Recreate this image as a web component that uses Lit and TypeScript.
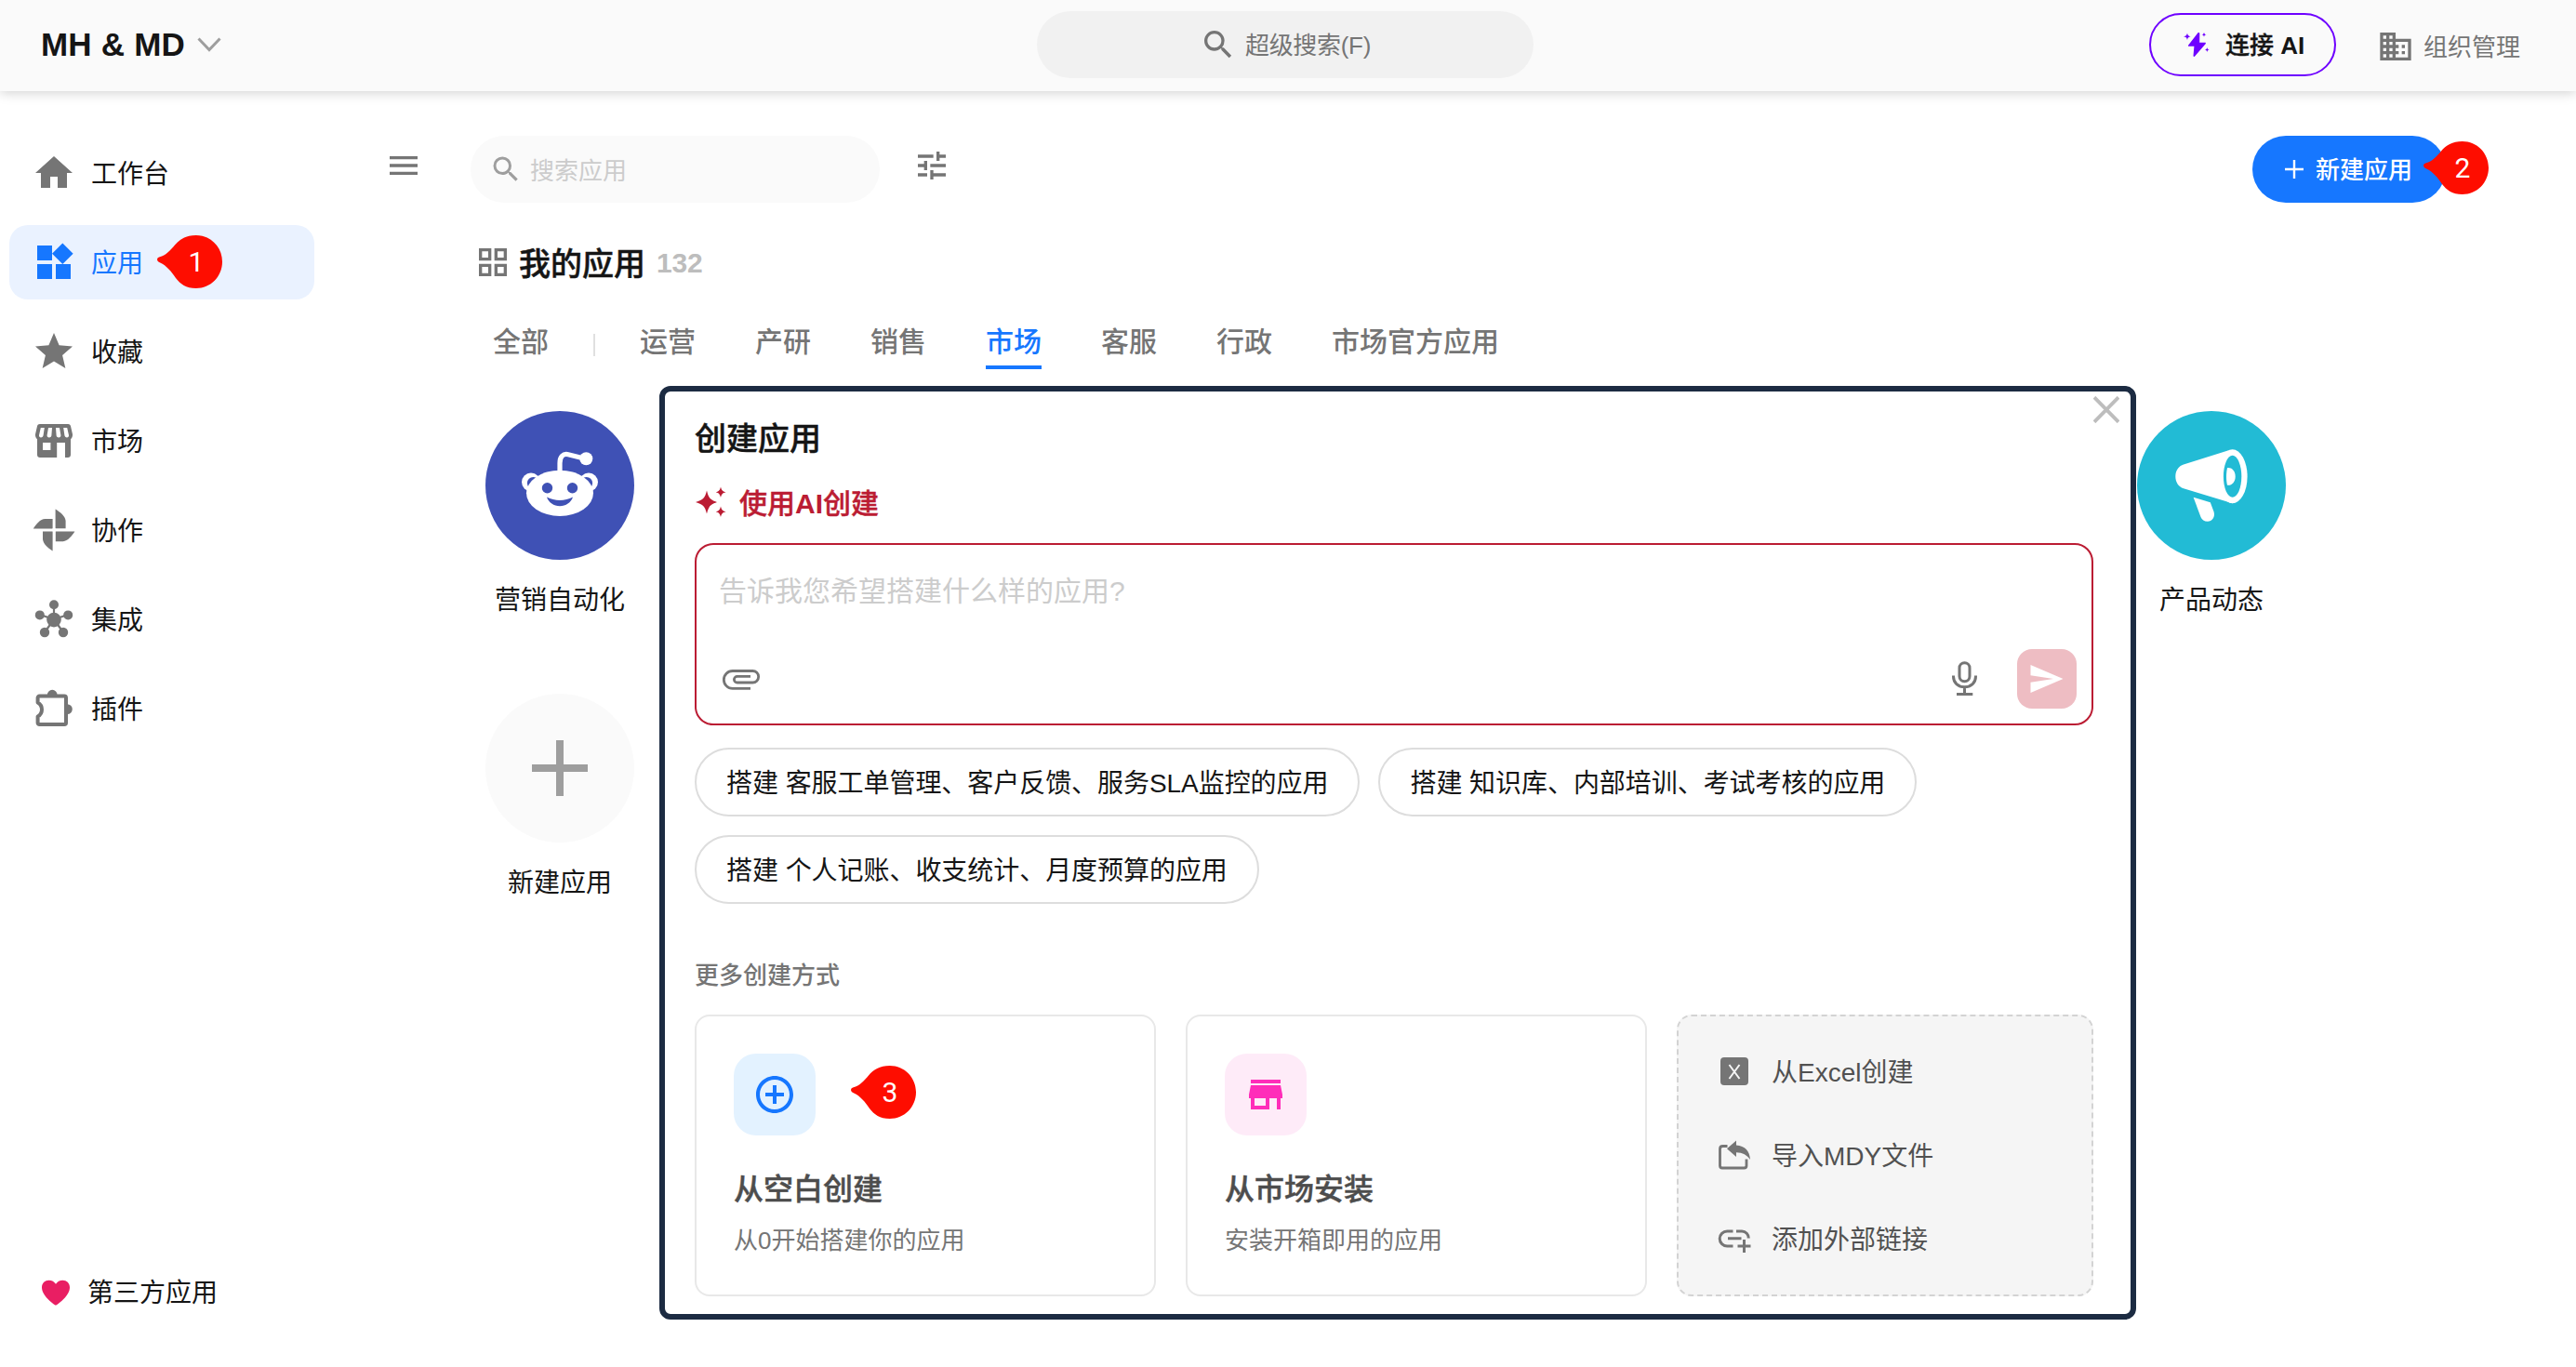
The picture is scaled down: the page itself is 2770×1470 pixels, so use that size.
import { LitElement, html, css, svg } from "lit";
import { customElement, property } from "lit/decorators.js";
import { classMap } from "lit/directives/class-map.js";

const glyphs: Record<string, unknown> = {
  home: svg`<path d="M10 20v-6h4v6h5v-8h3L12 3 2 12h3v8z"/>`,
  widgets: svg`<path d="M13 13v8h8v-8h-8zM3 21h8v-8H3v8zM3 3v8h8V3H3zm13.66-1.31L11 7.34 16.66 13l5.66-5.66-5.66-5.65z"/>`,
  star: svg`<path d="M12 17.27 18.18 21l-1.64-7.03L22 9.24l-7.19-.61L12 2 9.19 8.63 2 9.24l5.46 4.73L5.82 21z"/>`,
  market: svg`<path fill-rule="evenodd" d="M4.4 3h15.2c.7 0 1.2.4 1.4 1.1l1 4.4c.1 1.1-.3 2-1 2.6V19.500c0 .9-.6 1.500-1.500 1.500H4.500C3.600 21 3 20.400 3 19.500V11.100c-.7-.6-1.100-1.500-1-2.600l1-4.400C3.200 3.400 3.700 3 4.400 3zM4.900 5 4 9c-.1.700.4 1.200 1 1.200.7 0 1.200-.5 1.300-1.200L6.900 5zM9 5 8.300 9c-.1.700.4 1.200 1.100 1.200.8 0 1.300-.5 1.300-1.200L11 5zM13 5l.3 4c0 .7.500 1.200 1.300 1.200.7 0 1.200-.5 1.100-1.200L15 5zM17.100 5l.6 4c.1.700.6 1.200 1.300 1.200.6 0 1.100-.5 1-1.200L19.100 5zM6 13v4h4.200v-4zM13.600 13v8H18v-8z"/>`,
  wheel: svg`<path d="M12.800.800V11.100H18.300V7C18 4.500 15.500 2.500 12.800.800zM11.300 23.200V12.800H6v4.200c.3 2.500 2.600 4.500 5.300 6.200zM.9 11.300H11.300V6H7.200C4.600 6.200 2.600 8.600.9 11.300zM23.200 12.800H12.900v5.300h4c2.600-.3 4.600-2.600 6.300-5.300z"/><circle cx="12.050" cy="11.900" r="1" fill="#fff"/>`,
  hub: svg`<g stroke="currentColor" stroke-width="1.100"><path d="M12 12V4M12 12 4.500 9.500M12 12l7.500-2.500M12 12l-5 7M12 12l5 7"/></g><circle cx="12" cy="12.300" r="3.900"/><circle cx="12" cy="4.100" r="2.500"/><circle cx="4.400" cy="9.700" r="2.500"/><circle cx="19.600" cy="9.700" r="2.500"/><circle cx="7" cy="19" r="2.600"/><circle cx="17" cy="19" r="2.600"/>`,
  puzzle: svg`<path fill="none" stroke="currentColor" stroke-width="2" stroke-linejoin="round" d="M4.200 5.300H17.600a.9.900 0 0 1 .9.900V19.600a.9.900 0 0 1-.9.900H4.200a.9.900 0 0 1-.9-.9V16.200a4.300 4.300 0 0 0 0-7.500V6.200a.9.900 0 0 1 .9-.9z"/><path d="M8.400 4.600a2.700 2.700 0 0 1 5.400 0zM19.200 9.600a2.700 2.700 0 0 1 0 5.400z"/>`,
  menu: svg`<path d="M3 18h18v-2H3v2zm0-5h18v-2H3v2zm0-7v2h18V6H3z"/>`,
  search: svg`<path d="M15.500 14h-.79l-.28-.27A6.471 6.471 0 0 0 16 9.500 6.500 6.500 0 1 0 9.500 16c1.610 0 3.090-.59 4.230-1.570l.27.28v.79l5 4.990L20.490 19l-4.990-5zm-6 0C7.010 14 5 11.990 5 9.500S7.010 5 9.500 5 14 7.010 14 9.500 11.990 14 9.500 14z"/>`,
  tune: svg`<path d="M3 17v2h6v-2H3zM3 5v2h10V5H3zm10 16v-2h8v-2h-8v-2h-2v6h2zM7 9v2H3v2h4v2h2V9H7zm14 4v-2H11v2h10zm-6-4h2V7h4V5h-4V3h-2v6z"/>`,
  grid: svg`<path fill-rule="evenodd" d="M3 3v8h8V3H3zm6 6H5V5h4v4zm-6 4v8h8v-8H3zm6 6H5v-4h4v4zm4-16v8h8V3h-8zm6 6h-4V5h4v4zm-6 4v8h8v-8h-8zm6 6h-4v-4h4v4z"/>`,
  business: svg`<path d="M12 7V3H2v18h20V7H12zM6 19H4v-2h2v2zm0-4H4v-2h2v2zm0-4H4V9h2v2zm0-4H4V5h2v2zm4 12H8v-2h2v2zm0-4H8v-2h2v2zm0-4H8V9h2v2zm0-4H8V5h2v2zm10 12h-8v-2h2v-2h-2v-2h2v-2h-2V9h8v10zm-2-8h-2v2h2v-2zm0 4h-2v2h2v-2z"/>`,
  attachment: svg`<path fill="none" stroke="currentColor" stroke-width="1.400" d="M17 17.200H7.400A4.720 4.720 0 0 1 7.400 7.750H18.200A3.120 3.120 0 0 1 18.200 14H9.850A1.650 1.650 0 0 1 9.850 10.700H17"/>`,
  addCircle: svg`<path d="M13 7h-2v4H7v2h4v4h2v-4h4v-2h-4V7zm-1-5C6.480 2 2 6.480 2 12s4.480 10 10 10 10-4.480 10-10S17.520 2 12 2zm0 18c-4.410 0-8-3.590-8-8s3.590-8 8-8 8 3.590 8 8-3.590 8-8 8z"/>`,
  store: svg`<path d="M20 4H4v2h16V4zm1 10v-2l-1-5H4l-1 5v2h1v6h10v-6h4v6h2v-6h1zm-9 4H6v-4h6v4z"/>`,
  heart: svg`<path d="M12 21.200C9.500 19.600 2 14 2 8.300 2 5 4.300 3.100 7 3.100c2.200 0 4 1 5 2.800 1-1.800 2.800-2.800 5-2.800 2.700 0 5 1.900 5 5.200 0 5.700-7.500 11.300-10 12.900z"/>`,
};

@customElement("ui-icon")
export class UiIcon extends LitElement {
  @property() name = "";
  static styles = css`
    :host { display: block; flex: none; width: 40px; height: 40px; }
    .glyph { display: block; width: 100%; height: 100%; fill: currentColor; overflow: visible; }
  `;
  render() {
    return html`<svg class="glyph" viewBox="0 0 24 24">${glyphs[this.name]}</svg>`;
  }
}

@customElement("step-marker")
export class StepMarker extends LitElement {
  @property() label = "";
  static styles = css`
    :host { position: absolute; display: block; width: 70px; height: 57px; z-index: 5; }
    .drop { display: block; width: 70px; height: 57px; }
    .num {
      position: absolute; inset: 0 0 0 14px; text-align: center;
      font: 400 30px/57px Roboto, "Liberation Sans", sans-serif; color: #fff;
    }
  `;
  render() {
    return html`
      <svg class="drop" viewBox="0 0 70 57">
        <path fill="#fe0d00" d="M2.800 23.200C9 21.800 14 16.500 19 10.500 24 4.500 31 0 41.800 0 57.600 0 70 12.700 70 28.500S57.600 57 41.800 57C31 57 25 52.500 20 46 15 38.500 10 32.500 3.200 29.400-.9 28.200-1 24 2.800 23.200z"/>
      </svg>
      <span class="num">${this.label}</span>
    `;
  }
}

const navItems = [
  { icon: "home", label: "工作台" },
  { icon: "widgets", label: "应用", active: true, step: "1" },
  { icon: "star", label: "收藏" },
  { icon: "market", label: "市场" },
  { icon: "wheel", label: "协作" },
  { icon: "hub", label: "集成" },
  { icon: "puzzle", label: "插件" },
];

const tabs = ["运营", "产研", "销售", "市场", "客服", "行政", "市场官方应用"];

const prompts = [
  "搭建 客服工单管理、客户反馈、服务SLA监控的应用",
  "搭建 知识库、内部培训、考试考核的应用",
  "搭建 个人记账、收支统计、月度预算的应用",
];

@customElement("app-root")
export class AppRoot extends LitElement {
  static styles = css`
    :host {
      display: block; position: relative; width: 2770px; height: 1470px; overflow: hidden;
      background: #fff; color: #151515;
      font-family: "Liberation Sans", "Noto Sans CJK SC", sans-serif;
      font-size: 28px; line-height: 40px; white-space: nowrap;
    }
    * { box-sizing: border-box; }
    svg { display: block; flex: none; }
    .t1 { padding-top: 2px; }
    .t2 { padding-top: 4px; }
    .medium { font-weight: 500; }
    .semi { font-weight: 500; -webkit-text-stroke: .014em currentColor; }
    .latin { font-weight: 700; -webkit-text-stroke: 0; }

    .header {
      position: relative; display: grid; grid-template-columns: 1fr 534px 1fr; align-items: center;
      height: 98px; padding-bottom: 2px; background: #fafafa; box-shadow: 0 2px 12px rgba(0, 0, 0, .18);
    }
    .org { display: flex; align-items: center; gap: 13px; padding-left: 44px; font-size: 35px; font-weight: 700; letter-spacing: .2px; }
    .supersearch {
      display: flex; align-items: center; justify-content: center; gap: 9px; height: 72px;
      margin-left: -3px; margin-right: 3px;
      border-radius: 36px; background: #f1f1f1; color: #757575; font-size: 26px; letter-spacing: -.3px;
    }
    .actions { display: flex; align-items: center; justify-content: flex-end; padding-right: 60px; }
    .connect {
      display: flex; align-items: center; width: 201px; height: 68px; padding-left: 34px; gap: 16px;
      border: 2px solid #6e00ff; border-radius: 34px; font-size: 26px;
    }
    .manage { display: flex; align-items: center; gap: 10px; margin-left: 44px; color: #757575; font-size: 26px; padding-top: 4px; }

    .page { display: flex; height: 1372px; }
    .sidebar { display: flex; flex-direction: column; gap: 16px; width: 348px; padding: 48px 10px 40px; }
    .nav { position: relative; display: flex; align-items: center; gap: 16px; height: 80px; padding-left: 24px; border-radius: 20px; color: #151515; }
    .nav-icon { width: 48px; height: 48px; color: #757575; }
    .nav.active { background: #eaf2ff; color: #1677ff; }
    .nav.active .nav-icon { color: #1677ff; }
    .third { margin-top: auto; padding-left: 32px; }
    .heart { width: 36px; height: 36px; color: #e91e63; }
    .step-nav { left: 159px; top: 11px; }

    .content { flex: 1; padding-top: 48px; }
    .toolbar { display: flex; align-items: center; height: 72px; padding: 0 140px 0 66px; }
    .tool { color: #757575; margin-bottom: 8px; }
    .appsearch {
      display: flex; align-items: center; gap: 8px; width: 440px; height: 72px; margin: 0 36px 0 52px;
      padding-left: 20px; border-radius: 36px; background: #fafafa; color: #ccc; font-size: 26px;
    }
    .appsearch-icon { width: 36px; height: 36px; color: #9e9e9e; }
    .create {
      position: relative; display: flex; align-items: center; gap: 13px; width: 208px; height: 72px; margin-left: auto;
      padding-left: 35px; border-radius: 36px; background: #1677ff; color: #fff; font-size: 26px;
    }
    .step-create { left: 184px; top: 6px; }
    .section { display: flex; align-items: center; gap: 8px; height: 40px; margin-top: 44px; padding-left: 162px; }
    .section-icon { color: #757575; }
    .section-title { font-size: 34px; }
    .count { margin-left: 4px; font-size: 30px; font-weight: 700; color: #bdbdbd; letter-spacing: -.2px; }
    .tabs { display: flex; align-items: flex-start; gap: 64px; height: 51px; margin-top: 44px; padding-left: 182px; color: #757575; font-size: 30px; }
    .tab { height: 51px; padding-top: 2px; border-bottom: 4px solid transparent; }
    .tab.on { color: #1677ff; border-color: #1677ff; }
    .bar { width: 2px; height: 24px; margin: 13px -16px 0; background: #e0e0e0; }
    .apps { display: grid; grid-template-columns: repeat(9, 222px); row-gap: 80px; margin-top: 45px; padding-left: 143px; }
    .app { display: flex; flex-direction: column; align-items: center; gap: 24px; height: 224px; }
    .app.first { grid-column: 1; }
    .app.last { grid-column: 9; }

    .dialog {
      position: absolute; left: 709px; top: 415px; width: 1588px; height: 1004px; z-index: 3;
      display: flex; flex-direction: column; padding: 0 40px 0 32px;
      border: 6px solid #1c2b42; border-radius: 12px; background: #fff;
    }
    .close { position: absolute; right: 12px; top: 5px; }
    .dialog-title { margin-top: 31px; font-size: 34px; }
    .ai { display: flex; align-items: center; gap: 14px; height: 40px; margin-top: 28px; color: #bb1c33; font-size: 30px; }
    .box {
      display: flex; flex-direction: column; justify-content: space-between; height: 196px; margin-top: 24px;
      padding: 30px 16px 16px 24px; border: 2px solid #bb1c33; border-radius: 20px;
    }
    .hint { color: #ccc; font-size: 30px; }
    .box-actions { display: flex; align-items: center; color: #757575; }
    .clip { width: 48px; height: 48px; }
    .mic { margin-left: auto; }
    .send { display: grid; place-items: center; width: 64px; height: 64px; margin-left: 43px; border-radius: 16px; background: #eebdc3; }
    .chips { display: flex; flex-wrap: wrap; gap: 20px; margin-top: 24px; }
    .chip { display: flex; align-items: center; height: 74px; padding: 4px 32px 0; border: 2px solid #ddd; border-radius: 37px; letter-spacing: -.05px; }
    .more { margin-top: 57px; color: #757575; font-size: 26px; }
    .ways { display: flex; gap: 32px; margin-top: 22px; }
    .way { position: relative; width: 496px; height: 303px; padding: 40px; border: 2px solid #e8e8e8; border-radius: 16px; }
    .tile { display: grid; place-items: center; width: 88px; height: 88px; border-radius: 24px; }
    .tile.blue { background: #e3f2ff; color: #1677ff; }
    .tile.pink { background: #feebf8; color: #ff2db9; }
    .tile-icon { width: 48px; height: 48px; }
    .way-title { margin-top: 38px; font-size: 32px; color: #4d4d4d; }
    .way-sub { margin-top: 15px; font-size: 26px; color: #757575; }
    .step-way { left: 166px; top: 53px; }
    .others {
      display: flex; flex-direction: column; gap: 46px; width: 448px; height: 303px; padding: 37px 40px;
      border: 2px dashed #d3d3d3; border-radius: 16px; background: #f5f5f5; color: #515151;
    }
    .other { display: flex; align-items: center; gap: 20px; height: 44px; }
  `;

  private renderHeader() {
    return html`
      <header class="header">
        <div class="org">
          <span>MH &amp; MD</span>
          <svg width="26" height="16" viewBox="0 0 26 16" fill="none" stroke="#9e9e9e" stroke-width="3"><path d="M1.500 1.500 13 13.500 24.500 1.500"/></svg>
        </div>
        <div class="supersearch"><ui-icon name="search"></ui-icon><span class="t1">超级搜索(F)</span></div>
        <div class="actions">
          <div class="connect semi">
            <svg width="30" height="28" viewBox="0 0 30 28" fill="#6e00ff">
              <path d="M16.300 1.500 6.200 14.400c-.5.700-.2 1.400.6 1.400h5.600L11.500 26c.1 1 1 1.200 1.600.5L24.600 13.200c.6-.8.300-1.500-.6-1.500h-5.800L18.300 2c-.1-1-1.300-1.400-2-.5z"/>
              <path d="M5 1.500c.4 2.500 1 3.100 3.600 3.700C6 5.800 5.400 6.400 5 9 4.500 6.400 3.900 5.800 1 5.200 3.900 4.600 4.500 4 5 1.500zM23 .800c.3 1.700.8 2.200 2.500 2.500-1.700.3-2.200.8-2.500 2.500-.3-1.700-.8-2.200-2.500-2.500 1.700-.3 2.200-.8 2.500-2.500zM26.300 17c.3 1.700.8 2.200 2.500 2.500-1.700.3-2.200.8-2.500 2.500-.3-1.700-.8-2.200-2.500-2.500 1.700-.3 2.200-.8 2.500-2.500z"/>
            </svg>
            <span class="t1">连接 <span class="latin">AI</span></span>
          </div>
          <div class="manage"><ui-icon name="business"></ui-icon><span class="t1">组织管理</span></div>
        </div>
      </header>
    `;
  }

  private renderSidebar() {
    return html`
      <nav class="sidebar">
        ${navItems.map(
          (n) => html`
            <div class=${classMap({ nav: true, active: !!n.active })}>
              <ui-icon class="nav-icon" name=${n.icon}></ui-icon><span class="t2">${n.label}</span>
              ${n.step ? html`<step-marker class="step-nav" label=${n.step}></step-marker>` : null}
            </div>
          `
        )}
        <div class="nav third"><ui-icon class="heart" name="heart"></ui-icon><span class="t1">第三方应用</span></div>
      </nav>
    `;
  }

  private renderContent() {
    return html`
      <main class="content">
        <div class="toolbar">
          <ui-icon class="tool" name="menu"></ui-icon>
          <div class="appsearch"><ui-icon class="appsearch-icon" name="search"></ui-icon><span class="t2">搜索应用</span></div>
          <ui-icon class="tool" name="tune"></ui-icon>
          <div class="create medium">
            <svg width="20" height="20" viewBox="0 0 20 20" stroke="#fff" stroke-width="2.400"><path d="M10 0V20M0 10H20"/></svg>
            <span class="t1">新建应用</span>
            <step-marker class="step-create" label="2"></step-marker>
          </div>
        </div>
        <div class="section">
          <ui-icon class="section-icon" name="grid"></ui-icon>
          <span class="section-title semi t2">我的应用</span><span class="count t1">132</span>
        </div>
        <div class="tabs medium">
          <div class="tab">全部</div>
          <div class="bar"></div>
          ${tabs.map((t) => html`<div class=${classMap({ tab: true, on: t === "市场" })}>${t}</div>`)}
        </div>
        <div class="apps">
          <div class="app first">
            <svg width="160" height="160" viewBox="0 0 160 160">
              <circle cx="80" cy="80" r="80" fill="#3f51b5"/>
              <circle cx="49" cy="76.500" r="10" fill="#fff"/><circle cx="111" cy="76.500" r="10" fill="#fff"/>
              <circle cx="51.500" cy="77.500" r="6.600" fill="#3f51b5"/><circle cx="108.500" cy="77.500" r="6.600" fill="#3f51b5"/>
              <ellipse cx="80" cy="88.300" rx="36" ry="24.600" fill="#fff"/>
              <path d="M80 66V56c0-7 3.500-10.500 9-9.300L104 50.500" fill="none" stroke="#fff" stroke-width="5.200"/>
              <circle cx="108.300" cy="51.300" r="7" fill="#fff"/>
              <circle cx="66.500" cy="82.700" r="5.700" fill="#3f51b5"/><circle cx="93.500" cy="82.700" r="5.700" fill="#3f51b5"/>
              <path d="M66 92.600c8.500 4.500 19.500 4.500 28 0-2 6-7.500 9.600-14 9.600s-12-3.600-14-9.600z" fill="#3f51b5"/>
            </svg>
            <span>营销自动化</span>
          </div>
          <div class="app last">
            <svg width="160" height="160" viewBox="0 0 160 160">
              <circle cx="80" cy="80" r="80" fill="#22bbd5"/>
              <path d="M50 57.400 98.500 42.200 102.700 99.300 50 83.300C44.500 81.500 41.300 76.500 41.300 70.300S44.500 59.100 50 57.400z" fill="#fff"/>
              <ellipse cx="102.600" cy="70.300" rx="16" ry="29" fill="#fff"/>
              <ellipse cx="102.600" cy="70.300" rx="9.700" ry="22.500" fill="#22bbd5"/>
              <path d="M97 61.200c5-.8 8.700 3.500 8.700 9.200S102 80.400 97 79.800c-1.300-5.500-1.300-12.800 0-18.600z" fill="#fff"/>
              <path d="M60.600 92.800 78.800 98.200 82.600 108.500C84.200 114 80.500 118.800 75.800 118.800c-3.600 0-6-1.800-7.300-4.800z" fill="#fff"/>
            </svg>
            <span>产品动态</span>
          </div>
          <div class="app first">
            <svg width="160" height="160" viewBox="0 0 160 160">
              <circle cx="80" cy="80" r="80" fill="#fafafa"/>
              <path d="M80 50V110M50 80H110" stroke="#9e9e9e" stroke-width="8"/>
            </svg>
            <span>新建应用</span>
          </div>
        </div>
      </main>
    `;
  }

  private renderDialog() {
    return html`
      <section class="dialog">
        <svg class="close" width="28" height="29" viewBox="0 0 28 29" stroke="#bdbdbd" stroke-width="3.800"><path d="M1 1.200 27 27.800M27 1.200 1 27.800"/></svg>
        <div class="dialog-title semi">创建应用</div>
        <div class="ai semi">
          <svg width="34" height="34" viewBox="0 0 34 34" fill="#bb1c33">
            <path d="M13 4.500c2 8 3.600 10 11 12.500-7.400 2.500-9 4.500-11 12.500C11 21.500 9.400 19.500 1 17 9.400 14.500 11 12.500 13 4.500zM28 .500c.9 3.700 1.700 4.700 5.600 5.800-3.900 1.100-4.700 2.100-5.600 5.800-.9-3.700-1.700-4.700-5.300-5.800C26.300 5.200 27.100 4.200 28 .500zM28 21.500c.9 3.700 1.700 4.700 5.600 5.800-3.900 1.100-4.700 2.100-5.600 5.800-.9-3.700-1.700-4.700-5.300-5.800 3.600-1.100 4.400-2.100 5.300-5.800z"/>
          </svg>
          <span class="t2">使用<span class="latin">AI</span>创建</span>
        </div>
        <div class="box">
          <div class="hint">告诉我您希望搭建什么样的应用?</div>
          <div class="box-actions">
            <ui-icon class="clip" name="attachment"></ui-icon>
            <svg class="mic" width="27" height="38" viewBox="0 0 27 38" fill="none" stroke="#757575" stroke-width="3">
              <rect x="8" y="1.800" width="11" height="20" rx="5.500"/>
              <path d="M1.500 15.500v1c0 6.500 5 11.200 12 11.200s12-4.700 12-11.200v-1M13.500 28v8M5 35.600H22.300"/>
            </svg>
            <div class="send"><svg width="36" height="30" viewBox="0 0 36 30" fill="#fff"><path d="M.500 0 35.500 15 .500 30V18.700L25 15 .500 11.300z"/></svg></div>
          </div>
        </div>
        <div class="chips">${prompts.map((p) => html`<div class="chip">${p}</div>`)}</div>
        <div class="more medium">更多创建方式</div>
        <div class="ways">
          <div class="way">
            <div class="tile blue"><ui-icon class="tile-icon" name="addCircle"></ui-icon></div>
            <div class="way-title semi">从空白创建</div>
            <div class="way-sub">从0开始搭建你的应用</div>
            <step-marker class="step-way" label="3"></step-marker>
          </div>
          <div class="way">
            <div class="tile pink"><ui-icon class="tile-icon" name="store"></ui-icon></div>
            <div class="way-title semi">从市场安装</div>
            <div class="way-sub">安装开箱即用的应用</div>
          </div>
          <div class="others">
            <div class="other">
              <svg width="40" height="40" viewBox="0 0 40 40"><rect x="5" y="5" width="30" height="30" rx="4" fill="#757575"/><path d="M14.500 13 25.500 28M25.500 13 14.500 28" stroke="#f5f5f5" stroke-width="2"/></svg>
              <span class="t2">从Excel创建</span>
            </div>
            <div class="other">
              <svg width="40" height="40" viewBox="0 0 40 40">
                <path d="M12.500 10.500H7.500Q4.500 10.500 4.500 13.500V31.500Q4.500 34 7 34H30.500Q33 34 33 31.500V24.500" fill="none" stroke="#757575" stroke-width="2.800"/>
                <path d="M22 4.500V9.500C31.500 10.300 36.500 15.500 37 25 33.500 20 29 17.300 22 17.200V22L12 13.200z" fill="#757575"/>
              </svg>
              <span class="t2">导入MDY文件</span>
            </div>
            <div class="other">
              <svg width="40" height="40" viewBox="0 0 40 40" fill="none" stroke="#757575" stroke-width="3">
                <path d="M18.500 12H12.200a7.200 7.200 0 0 0 0 16h6.300M22 12h6a7.200 7.200 0 0 1 7.300 7.500M13 19.800H27.500M30.500 21v14M23.500 28H37.500"/>
              </svg>
              <span class="t2">添加外部链接</span>
            </div>
          </div>
        </div>
      </section>
    `;
  }

  render() {
    return html`
      ${this.renderHeader()}
      <div class="page">${this.renderSidebar()}${this.renderContent()}</div>
      ${this.renderDialog()}
    `;
  }
}
